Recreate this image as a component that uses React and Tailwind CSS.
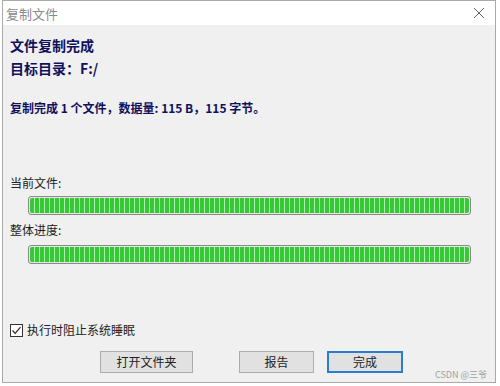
export default function App() {
  const font = { fontFamily: '"Noto Sans CJK SC", "Noto Sans", sans-serif' };
  const bar =
    "h-[19px] ml-[18px] w-[443px] rounded-[3px] border border-[#8a8a8a] bg-[#e6e6e6] p-[1px]";
  const fill =
    "h-full w-full rounded-[2px] bg-[repeating-linear-gradient(90deg,#36c936_0px,#36c936_4px,#b0eeb0_4px,#b0eeb0_5px)]";
  return (
    <div className="w-[500px] h-[386px] bg-white overflow-hidden" style={font}>
      <div className="ml-[2px] w-[494px] h-[383px] border border-[#a9a9a9] flex flex-col">
        <div className="h-[24px] bg-white flex items-center justify-between pl-[3px] pr-[8px]">
          <span className="text-[13px] text-[#8a8a8a] leading-none">复制文件</span>
          <svg width="12" height="12" viewBox="0 0 12 12" className="mr-[2px]">
            <path d="M1 1L11 11M11 1L1 11" stroke="#666" strokeWidth="1" />
          </svg>
        </div>
        <div className="flex-1 bg-[#f0f0f0] flex flex-col pl-[7px] relative">
          <div className="mt-[10px] text-[14px] leading-[20px] font-bold text-[#10105c]">文件复制完成</div>
          <div className="mt-[3px] text-[14px] leading-[20px] font-bold text-[#10105c]">目标目录：F:/</div>
          <div className="mt-[22px] text-[12px] leading-[16px] font-bold text-[#10105c]">
            复制完成 1 个文件，数据量: 115 B，115 字节。
          </div>
          <div className="mt-[59px] text-[12px] leading-[16px] text-[#222]">当前文件:</div>
          <div className={"mt-[5px] " + bar}>
            <div className={fill}></div>
          </div>
          <div className="mt-[7px] text-[12px] leading-[16px] text-[#222]">整体进度:</div>
          <div className={"mt-[7px] " + bar}>
            <div className={fill}></div>
          </div>
          <div className="mt-[58px] flex items-center gap-[4px]">
            <div className="w-[13px] h-[13px] border border-[#333] bg-white flex items-center justify-center">
              <svg width="11" height="11" viewBox="0 0 11 11">
                <path d="M1.5 5.5L4.2 8.3L9.5 2.2" fill="none" stroke="#222" strokeWidth="1.2" />
              </svg>
            </div>
            <span className="text-[12px] leading-[16px] text-[#222]">执行时阻止系统睡眠</span>
          </div>
          <div className="mt-[13px] flex items-center">
            <div className="ml-[90px] w-[93px] h-[22px] border border-[#adadad] bg-[#e1e1e1] flex items-center justify-center text-[12px] text-[#222]">
              打开文件夹
            </div>
            <div className="ml-[46px] w-[75px] h-[22px] border border-[#adadad] bg-[#e1e1e1] flex items-center justify-center text-[12px] text-[#222]">
              报告
            </div>
            <div className="ml-[13px] w-[76px] h-[22px] border-2 border-[#2a7bd2] bg-[#e1e1e1] flex items-center justify-center text-[12px] text-[#222]">
              完成
            </div>
          </div>
          <div className="absolute right-[8px] bottom-[3px] text-[9px] text-[#a0a0a0] leading-none">CSDN @三爷</div>
        </div>
      </div>
    </div>
  );
}
